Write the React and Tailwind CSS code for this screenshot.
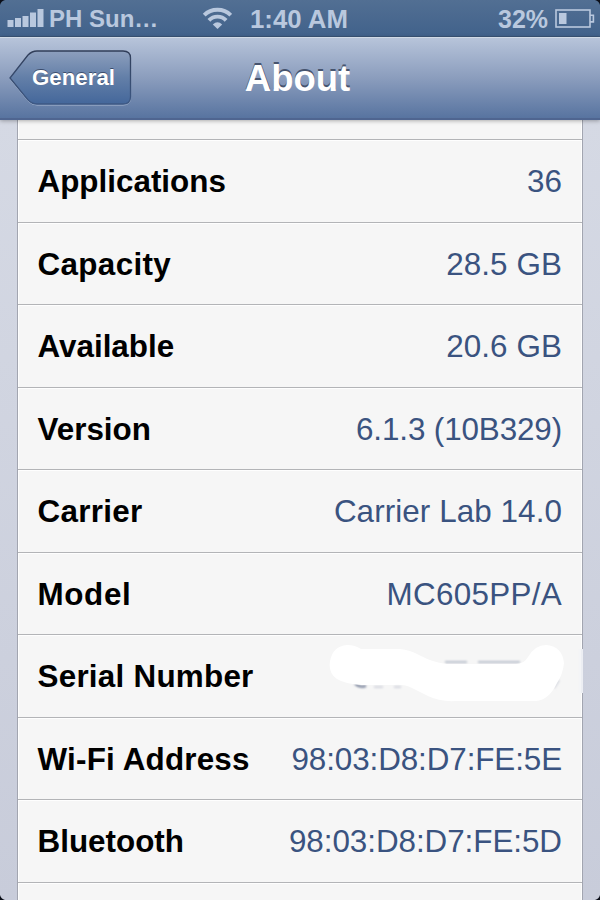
const rows = [
    { label: "Applications", value: "36" },
    { label: "Capacity", value: "28.5 GB", labelClass: "tracking-[0.35px]", valueClass: "tracking-[0.1px]" },
    { label: "Available", value: "20.6 GB", valueClass: "tracking-[0.1px]" },
    { label: "Version", value: "6.1.3 (10B329)", valueClass: "tracking-[-0.12px]" },
    { label: "Carrier", value: "Carrier Lab 14.0", labelClass: "tracking-[0.3px]", valueClass: "tracking-[0.08px]" },
    { label: "Model", value: "MC605PP/A", labelClass: "tracking-[0.65px]", valueClass: "tracking-[0.3px]" },
    { label: "Serial Number", hidden: true, labelClass: "tracking-[0.25px]" },
    { label: "Wi-Fi Address", value: "98:03:D8:D7:FE:5E", labelClass: "tracking-[0.2px]", valueClass: "tracking-[-0.1px]" },
    { label: "Bluetooth", value: "98:03:D8:D7:FE:5D", valueClass: "tracking-[-0.05px]" },
]

function SignalIcon() {
    return (
        <svg className="ml-[7px] h-[20px] w-[37px] shrink-0" viewBox="0 0 37 20" fill="currentColor">
            <rect x="0.5" y="12" width="6" height="7" />
            <rect x="8" y="10" width="6" height="9" />
            <rect x="15.5" y="8" width="6" height="11" />
            <rect x="23" y="4.5" width="6" height="14.5" />
            <rect x="30.5" y="1" width="6" height="18" />
        </svg>
    )
}

function WifiIcon() {
    return (
        <svg className="h-[22px] w-[30px] shrink-0" viewBox="0 0 30 22" fill="none" stroke="currentColor" strokeWidth="3.9">
            <path d="M2.2 8.2C9.2 1 21.8 1 28.8 8.2" />
            <path d="M6.9 13.4C11.6 8.4 19.4 8.4 24.1 13.4" />
            <path d="M10.8 17.4Q15.5 13.2 20.2 17.4L15.5 22Z" fill="currentColor" stroke="none" />
        </svg>
    )
}

function BatteryIcon() {
    return (
        <svg className="h-[19px] w-[40px] shrink-0" viewBox="0 0 40 19" fill="none" stroke="currentColor" strokeWidth="1.6">
            <rect x="1" y="1" width="34" height="17" />
            <path d="M35 6.3h3.4v6.6H35" />
            <rect x="4" y="4" width="7.5" height="11" fill="currentColor" stroke="none" />
        </svg>
    )
}

function StatusBar() {
    return (
        <div className="flex h-[37px] shrink-0 items-center border-b border-[#3b5578] bg-linear-to-b from-[#526f93] to-[#41628b] font-bold text-[#b9c8de]">
            <SignalIcon />
            <span className="ml-[5px] w-[153px] pt-px text-[24px] leading-[36px]">PH Sun…</span>
            <WifiIcon />
            <span className="ml-[18px] w-[248px] pt-px text-[25.8px] leading-[36px]">1:40 AM</span>
            <span className="w-[57px] pt-px text-[25px] leading-[36px]">32%</span>
            <BatteryIcon />
        </div>
    )
}

function BackButton() {
    return (
        <button className="relative ml-[9px] flex h-[56px] w-[123px] items-center pl-[23px]">
            <svg className="absolute inset-0 h-full w-full" viewBox="0 0 123 56">
                <defs>
                    <linearGradient id="back" x1="0" y1="0" x2="0" y2="1">
                        <stop offset="0" stopColor="#8d9fbd" />
                        <stop offset="0.5" stopColor="#637fa8" />
                        <stop offset="1" stopColor="#44679b" />
                    </linearGradient>
                    <linearGradient id="edge" x1="0" y1="0" x2="0" y2="1">
                        <stop offset="0" stopColor="#303d58" />
                        <stop offset="1" stopColor="#3d5884" />
                    </linearGradient>
                </defs>
                <path d="M1 29 19 6Q23 2.3 28 2.3H114Q121.5 2.3 121.5 9V48Q121.5 55 114 55H28Q23 55 19 51Z" fill="none" stroke="#a7b8d2" strokeWidth="1" />
                <path d="M1 28 19 5Q23 1 28 1H114Q121.5 1 121.5 8V47Q121.5 54 114 54H28Q23 54 19 50Z" fill="url(#back)" stroke="url(#edge)" strokeWidth="1.3" />
            </svg>
            <span className="relative text-[22.3px] font-bold text-white [text-shadow:0_-1.5px_0_#3c4d6c]">General</span>
        </button>
    )
}

function NavBar() {
    return (
        <div className="relative z-10 grid h-[83px] shrink-0 grid-cols-[1fr_auto_1fr] items-center border-t border-b-2 border-t-[#d0dae6] border-b-[#4f6590] bg-linear-to-b from-[#b7c4da] via-[#8b9dbd] to-[#5874a0] shadow-[0_1px_4px_rgba(0,0,0,0.3)]">
            <BackButton />
            <h1 className="mt-[3px] -ml-[5px] text-[36.5px] font-bold text-white [text-shadow:0_-2px_0_#46546e]">About</h1>
        </div>
    )
}

/* white marker stroke that covers the serial number */
function Scribble() {
    return (
        <svg className="-mr-[4px] h-[62px] w-[238px] overflow-visible" viewBox="0 0 238 62">
            <defs>
                <filter id="soft" x="-20%" y="-20%" width="140%" height="140%">
                    <feGaussianBlur stdDeviation="1" />
                </filter>
            </defs>
            <g filter="url(#soft)" fill="none" stroke="#d3d6de" strokeWidth="2">
                <path d="M27 39q5 4 11 2" stroke="#6b7690" />
                <path d="M46 42h9M66 42h7" />
                <path d="M117 17h22M150 17h42" stroke="#b9bfcb" />
                <path d="M226 43l5-8" />
            </g>
            <path
                d="M19 0Q27 0 33 4L72 4Q82 5 91 10Q106 18 119 19H188Q196 19 200 12Q207 0 218 0Q234 1 236 18Q235 29 229 38Q221 55 208 56H128Q112 57 100 51L84 43Q76 39 66 40H34Q17 39 9 34Q0 28 2 16Q5 1 19 0Z"
                fill="white"
            />
            {/* the marker also brushed over the card edge */}
            <path d="M252 4V48" stroke="#f4f5f7" strokeWidth="3" />
            <rect x="253" y="4" width="2" height="44" fill="#eceef3" />
        </svg>
    )
}

function Row({ label, value, hidden, labelClass = "", valueClass = "" }) {
    return (
        <li className="flex h-[82.5px] items-center justify-between border-b border-[#b3b4b7] pr-[20px] pl-[19.5px] text-[31.4px] shadow-[inset_0_1px_0_#fefefe]">
            <span className={`pt-[2px] font-bold text-black ${labelClass}`}>{label}</span>
            {hidden ? <Scribble /> : <span className={`pt-[2px] text-[#3a5380] ${valueClass}`}>{value}</span>}
        </li>
    )
}

export default function App() {
    return (
        <div className="relative flex h-[900px] w-[600px] flex-col overflow-hidden bg-[#cdd1de] font-['Liberation_Sans',Arial,sans-serif]">
            <StatusBar />
            <NavBar />
            <div className="flex-1 overflow-hidden bg-linear-to-b from-[#d5d9e4] to-[#c8ccda] px-[17px]">
                <ul className="h-full border-x border-[#a2a5b0] bg-[#f6f6f6] shadow-[inset_1px_0_0_#fefefe,inset_-1px_0_0_#fefefe]">
                    <li className="h-[20px] border-b border-[#b3b4b7]" />
                    {rows.map((row) => (
                        <Row key={row.label} {...row} />
                    ))}
                    <li className="h-[18px] shadow-[inset_0_1px_0_#fefefe]" />
                </ul>
            </div>
            {/* rounded screen corners */}
            <svg className="absolute inset-0 z-20 h-full w-full" viewBox="0 0 600 900" fill="#0b0e18">
                <path d="M0 0H5Q1 1 0 5Z" />
                <path d="M600 0H595Q599 1 600 5Z" />
                <path d="M0 900V895Q1 899 5 900Z" />
                <path d="M600 900V895Q599 899 595 900Z" />
            </svg>
        </div>
    )
}
